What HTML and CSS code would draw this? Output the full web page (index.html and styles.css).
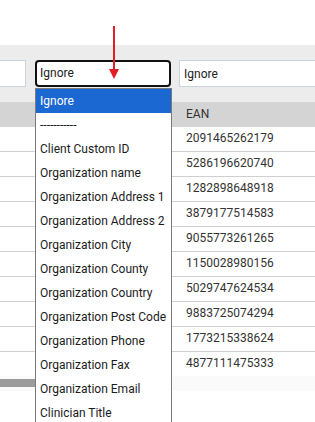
FILE: index.html
```html
<!DOCTYPE html>
<html lang="en">
<head>
  <meta charset="UTF-8">
  <meta name="viewport" content="width=device-width, initial-scale=1.0">
  <title>Column Mapping</title>
  <link rel="stylesheet" href="styles.css">
</head>
<body>

  <div class="page">
    <div class="top-space"></div>

    <div class="mapping-bar">
      <input class="map-input" type="text" value="Ignore">
      <div class="select-wrap">
        <div class="map-select">Ignore</div>
        <ul class="dropdown">
          <li class="selected">Ignore</li>
          <li>-----------</li>
          <li>Client Custom ID</li>
          <li>Organization name</li>
          <li>Organization Address 1</li>
          <li>Organization Address 2</li>
          <li>Organization City</li>
          <li>Organization County</li>
          <li>Organization Country</li>
          <li>Organization Post Code</li>
          <li>Organization Phone</li>
          <li>Organization Fax</li>
          <li>Organization Email</li>
          <li>Clinician Title</li>
        </ul>
      </div>
      <input class="map-input" type="text" value="Ignore">
    </div>

    <div class="data-table">
      <div class="row head">
        <div class="cell"></div>
        <div class="cell"></div>
        <div class="cell">EAN</div>
      </div>
      <div id="rows"></div>
      <div class="scroll-strip">
        <div class="scroll-thumb"></div>
      </div>
    </div>

    <!-- pointer arrow drawn over the page -->
    <svg class="arrow" width="14" height="56" viewBox="0 0 14 56">
      <line x1="7" y1="0" x2="7" y2="46" stroke="#e21f26" stroke-width="2"/>
      <polygon points="2,43 12,43 7,53" fill="#e21f26"/>
    </svg>
  </div>

  <script>
    const eans = [
      '2091465262179', '5286196620740', '1282898648918', '3879177514583',
      '9055773261265', '1150028980156', '5029747624534', '9883725074294',
      '1773215338624', '4877111475333'
    ];

    const rows = document.getElementById('rows');
    eans.forEach(ean => {
      const row = document.createElement('div');
      row.className = 'row';
      row.innerHTML = `
        <div class="cell"></div>
        <div class="cell"></div>
        <div class="cell">${ean}</div>
      `;
      rows.appendChild(row);
    });
  </script>
</body>
</html>
```

FILE: styles.css
```css
body {
  margin: 0;
  padding: 0;
  font-family: Roboto, "Liberation Sans", Arial, sans-serif;
  font-size: 12px;
  color: #222;
  background-color: #fff;
  overflow: hidden;
}

.page {
  position: relative;
  width: 315px;
  height: 422px;
  overflow: hidden;
}

.top-space {
  height: 45px;
}

.mapping-bar {
  display: grid;
  grid-template-columns: 136px 136px 136px;
  column-gap: 9px;
  margin-left: -110px;
  padding: 15px 0;
  background-color: #ececec;
}

.mapping-bar > :last-child {
  margin-left: -1px;
}

.map-input {
  box-sizing: border-box;
  height: 27px;
  margin: 0;
  padding: 0 4px;
  border: 1px solid #c9d5db;
  border-radius: 0;
  background-color: #fff;
  font-family: inherit;
  font-size: 12px;
  color: #222;
  outline: none;
}

.select-wrap {
  position: relative;
}

.map-select {
  box-sizing: border-box;
  height: 27px;
  padding: 0 3px;
  border: 2px solid #111;
  border-radius: 4px;
  background-color: #fff;
  line-height: 23px;
}

.dropdown {
  position: absolute;
  top: 28px;
  left: 0;
  z-index: 2;
  width: 137px;
  box-sizing: border-box;
  margin: 0;
  padding: 0;
  list-style-type: none;
  background-color: #fff;
  border: 1px solid #7a7a7a;
}

.dropdown li {
  height: 24px;
  padding: 0 4px;
  line-height: 24px;
  white-space: nowrap;
  color: #1c1c1c;
}

.dropdown li.selected {
  background-color: #1b68d3;
  color: #fff;
}

.row {
  display: grid;
  grid-template-columns: 35px 137px 1fr;
  height: 24px;
  line-height: 23px;
  border-bottom: 1px solid #cfcfcf;
}

.row.head {
  height: 25px;
  line-height: 25px;
  background-color: #d4d4d4;
  border-bottom: none;
  color: #333;
}

#rows .row:last-child {
  border-bottom: none;
}

.cell {
  padding: 0 14px;
  color: #333;
  white-space: nowrap;
}

.scroll-strip {
  height: 15px;
  background-color: #fafafa;
  padding-top: 3px;
  box-sizing: border-box;
}

.scroll-thumb {
  width: 60px;
  height: 8px;
  background-color: #9b9b9b;
}

.arrow {
  position: absolute;
  top: 26px;
  left: 107px;
}
```
